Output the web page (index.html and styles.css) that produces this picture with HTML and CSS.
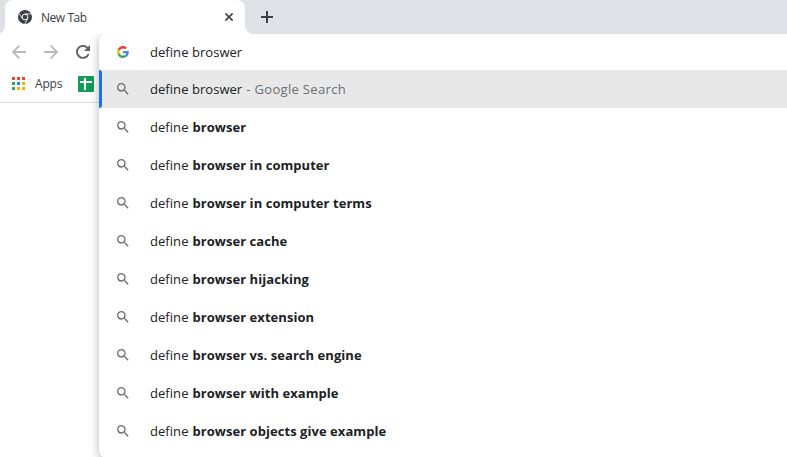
FILE: index.html
```html
<!DOCTYPE html>
<html lang="en">
<head>
    <meta charset="UTF-8">
    <meta name="viewport" content="width=device-width, initial-scale=1.0">
    <title>New Tab</title>
    <link rel="stylesheet" href="styles.css">
</head>
<body>
    <!-- Search icon shared by all suggestions -->
    <svg class="sprite">
        <symbol id="search" viewBox="0 0 24 24">
            <path d="M15.5 14h-.79l-.28-.27A6.47 6.47 0 0 0 16 9.5 6.5 6.5 0 1 0 9.5 16c1.61 0 3.09-.59 4.23-1.57l.27.28v.79l5 4.99L20.49 19l-4.99-5zm-6 0C7.01 14 5 11.99 5 9.5S7.01 5 9.5 5 14 7.01 14 9.5 11.99 14 9.5 14z"/>
        </symbol>
    </svg>

    <div class="tab-strip">
        <div class="tab">
            <svg class="tab-icon" viewBox="0 0 14 14">
                <circle cx="7" cy="7" r="7" fill="#3c4043"/>
                <circle cx="7" cy="7" r="2.9" fill="none" stroke="#fff" stroke-width="1"/>
                <path d="M7 3.9h6.2M4.3 8.5L1.3 3.6M9.7 8.5L6.8 14" stroke="#fff" stroke-width=".8"/>
            </svg>
            <span class="tab-title">New Tab</span>
            <svg class="tab-close" viewBox="0 0 8 8"><path d="M.4.4l7.2 7.2M7.6.4L.4 7.6"/></svg>
        </div>
        <svg class="new-tab" viewBox="0 0 12 12"><path d="M6 0v12M0 6h12"/></svg>
    </div>

    <div class="toolbar">
        <svg class="nav-icon off" viewBox="0 0 14 14"><path d="M14 7H1.2M7.3.7L1 7l6.3 6.3"/></svg>
        <svg class="nav-icon off" viewBox="0 0 14 14"><path d="M0 7h12.8M6.7.7L13 7l-6.3 6.3"/></svg>
        <svg class="nav-icon reload" viewBox="0 0 14 14">
            <path d="M12.6 9A6 6 0 1 1 11.4 2.8L12.8 4.3"/>
            <path class="solid" d="M14 0v6H8z"/>
        </svg>
    </div>

    <div class="bookmarks">
        <svg class="apps-icon" viewBox="0 0 13 13">
            <path fill="#ea4335" d="M0 0h3v3H0zM5 0h3v3H5zM10 0h3v3h-3z"/>
            <path fill="#34a853" d="M0 5h3v3H0zM0 10h3v3H0z"/>
            <path fill="#1a85ff" d="M5 5h3v3H5z"/>
            <path fill="#fbab05" d="M10 5h3v3h-3zM5 10h3v3H5zM10 10h3v3h-3z"/>
        </svg>
        <span class="apps-label">Apps</span>
        <svg class="sheets-icon" viewBox="0 0 16 16">
            <rect width="16" height="16" rx="1" fill="#0f9d58"/>
            <path d="M7 2v12M2 6h12" stroke="#fff" stroke-width="2"/>
        </svg>
    </div>

    <div class="omnibox">
        <div class="query">
            <svg class="google-icon" viewBox="0 0 48 48">
                <path fill="#ea4335" d="M24 9.5c3.54 0 6.71 1.22 9.21 3.6l6.85-6.85C35.9 2.38 30.47 0 24 0 14.62 0 6.51 5.38 2.56 13.22l7.98 6.19C12.43 13.72 17.74 9.5 24 9.5z"/>
                <path fill="#4285f4" d="M46.98 24.55c0-1.57-.15-3.09-.38-4.55H24v9.02h12.94c-.58 2.96-2.26 5.48-4.78 7.18l7.73 6c4.51-4.18 7.09-10.36 7.09-17.65z"/>
                <path fill="#fbbc05" d="M10.53 28.59c-.48-1.45-.76-2.99-.76-4.59s.27-3.14.76-4.59l-7.98-6.19C.92 16.46 0 20.12 0 24s.92 7.54 2.56 10.78l7.97-6.19z"/>
                <path fill="#34a853" d="M24 48c6.48 0 11.93-2.13 15.89-5.81l-7.73-6c-2.15 1.45-4.92 2.3-8.16 2.3-6.26 0-11.57-4.22-13.47-9.91l-7.98 6.19C6.51 42.62 14.62 48 24 48z"/>
            </svg>
            <span class="text">define broswer</span>
        </div>
        <div class="row selected"><svg class="search-icon"><use href="#search"/></svg><span class="text">define broswer</span><span class="hint">- Google Search</span></div>
        <div class="row"><svg class="search-icon"><use href="#search"/></svg><span class="text">define</span><b>browser</b></div>
        <div class="row"><svg class="search-icon"><use href="#search"/></svg><span class="text">define</span><b>browser in computer</b></div>
        <div class="row"><svg class="search-icon"><use href="#search"/></svg><span class="text">define</span><b>browser in computer terms</b></div>
        <div class="row"><svg class="search-icon"><use href="#search"/></svg><span class="text">define</span><b>browser cache</b></div>
        <div class="row"><svg class="search-icon"><use href="#search"/></svg><span class="text">define</span><b>browser hijacking</b></div>
        <div class="row"><svg class="search-icon"><use href="#search"/></svg><span class="text">define</span><b>browser extension</b></div>
        <div class="row"><svg class="search-icon"><use href="#search"/></svg><span class="text">define</span><b>browser vs. search engine</b></div>
        <div class="row"><svg class="search-icon"><use href="#search"/></svg><span class="text">define</span><b>browser with example</b></div>
        <div class="row"><svg class="search-icon"><use href="#search"/></svg><span class="text">define</span><b>browser objects give example</b></div>
    </div>
</body>
</html>
```
FILE: styles.css
```css
* {
    margin: 0;
    padding: 0;
    box-sizing: border-box;
}

body {
    font-family: "Open Sans", "Noto Sans", sans-serif;
    background: #fff;
    color: #202124;
    height: 457px;
    position: relative;
    overflow: hidden;
}

svg {
    display: block;
    flex: none;
}

.sprite {
    display: none;
}

/* Tab strip */
.tab-strip {
    display: flex;
    height: 34px;
    padding-left: 5px;
    background: #dee1e6;
}

.tab {
    position: relative;
    display: flex;
    align-items: center;
    width: 240px;
    padding: 0 12px 0 13px;
    background: #fff;
    border-radius: 8px 8px 0 0;
}

/* curved feet of the active tab */
.tab::before,
.tab::after {
    content: "";
    position: absolute;
    bottom: 0;
    width: 8px;
    height: 8px;
}

.tab::before {
    left: -8px;
    background: radial-gradient(circle at 0 0, transparent 7.5px, #fff 8px);
}

.tab::after {
    right: -8px;
    background: radial-gradient(circle at 100% 0, transparent 7.5px, #fff 8px);
}

.tab-icon {
    width: 14px;
    height: 14px;
}

.tab-title {
    flex: 1;
    margin-left: 9px;
    font-size: 12px;
    letter-spacing: -0.45px;
    color: #3c4043;
}

.tab-close {
    width: 8px;
    height: 8px;
    stroke: #3c4043;
    stroke-width: 1.6;
}

.new-tab {
    width: 12px;
    height: 12px;
    margin: 11px 0 0 16px;
    stroke: #3c4043;
    stroke-width: 2;
}

/* Toolbar */
.toolbar {
    display: flex;
    align-items: center;
    gap: 18px;
    height: 36px;
    padding-left: 12px;
}

.nav-icon {
    width: 14px;
    height: 14px;
    fill: none;
    stroke: #5f6368;
    stroke-width: 1.9;
}

.off {
    stroke: #bababa;
}

.solid {
    fill: #5f6368;
    stroke: none;
}

/* Bookmarks bar */
.bookmarks {
    display: flex;
    align-items: center;
    height: 33px;
    padding: 0 0 5px 12px;
    border-bottom: 1px solid #d8dadd;
}

.apps-icon {
    width: 13px;
    height: 13px;
}

.apps-label {
    width: 43px;
    margin-left: 10px;
    font-size: 12px;
    letter-spacing: -0.2px;
    color: #3c4043;
}

.sheets-icon {
    width: 16px;
    height: 16px;
}

/* Address bar dropdown, drawn over the page */
.omnibox {
    position: absolute;
    top: 34px;
    left: 99px;
    right: -20px;
    height: 424px;
    background: #fff;
    border-radius: 8px;
    box-shadow: 0 2px 10px rgba(0, 0, 0, 0.3);
    clip-path: inset(0 0 -20px -20px);
    font-size: 13px;
}

.query,
.row {
    display: flex;
    align-items: center;
    height: 38px;
    padding-left: 16px;
    white-space: nowrap;
}

.query {
    height: 36px;
    padding-left: 18px;
}

.google-icon {
    width: 12px;
    height: 12px;
    margin-right: 21px;
}

.text {
    letter-spacing: 0.05px;
}

.selected {
    position: relative;
    background: #e8e8e8;
}

.selected::before {
    content: "";
    position: absolute;
    top: 0;
    left: 0;
    width: 3px;
    height: 38px;
    background: #1a73e8;
    border-radius: 0 3px 3px 0;
}

.search-icon {
    width: 16px;
    height: 16px;
    margin-right: 19px;
    fill: #6b6e72;
}

.hint {
    margin-left: 4px;
    letter-spacing: 0.33px;
    color: #6b6f74;
}

.row b {
    margin-left: 4px;
    font-weight: 700;
    letter-spacing: 0.05px;
}
```
